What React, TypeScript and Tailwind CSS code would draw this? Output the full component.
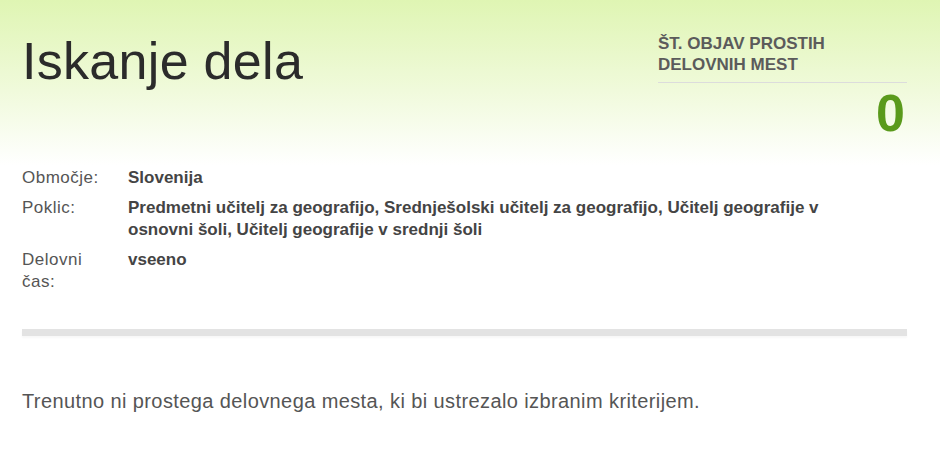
import React from 'react';

const criteria = [
  { label: 'Območje:', value: 'Slovenija' },
  {
    label: 'Poklic:',
    value:
      'Predmetni učitelj za geografijo, Srednješolski učitelj za geografijo, Učitelj geografije v osnovni šoli, Učitelj geografije v srednji šoli',
  },
  { label: 'Delovni čas:', value: 'vseeno' },
];

export default function App() {
  return (
    <div
      className="min-h-[451px] w-full bg-white bg-[linear-gradient(to_bottom,#dff5b3_0px,#f0fadb_90px,#ffffff_165px)] pl-[22px] pr-[33px]"
      style={{ fontFamily: '"Liberation Sans", Arial, sans-serif' }}
    >
      {/* Header */}
      <div className="flex items-start justify-between">
        <h1 className="mt-[35px] text-[52px] leading-none font-normal text-[#2b2b2b] tracking-[0.3px]">Iskanje dela</h1>
        <div className="mt-[33px] w-[249px]">
          <p className="text-[17px] leading-[21px] font-bold text-[#5b5b5b]">
            ŠT. OBJAV PROSTIH
            <br />
            DELOVNIH MEST
          </p>
          <div className="mt-[7px] h-px bg-[#dcdcdc]" />
          <div className="mt-[4px] text-right text-[52px] leading-none font-bold text-[#5a9a1c] pr-[2px]">0</div>
        </div>
      </div>

      {/* Criteria */}
      <div className="mt-[28px] flex flex-col gap-[8px]">
        {criteria.map(c => (
          <div key={c.label} className="flex text-[17px] leading-[22px]">
            <div className="w-[106px] shrink-0 pr-4 text-[#555] tracking-[0.5px]">{c.label}</div>
            <div className="w-[740px] font-bold text-[#444]">{c.value}</div>
          </div>
        ))}
      </div>

      {/* Divider */}
      <div className="mt-[36px] h-[7px] bg-[#e3e3e3] shadow-[0_2px_2px_rgba(0,0,0,0.03)]" />

      <p className="mt-[53px] text-[20px] leading-[24px] text-[#555] tracking-[0.4px]">
        Trenutno ni prostega delovnega mesta, ki bi ustrezalo izbranim kriterijem.
      </p>
    </div>
  );
}
